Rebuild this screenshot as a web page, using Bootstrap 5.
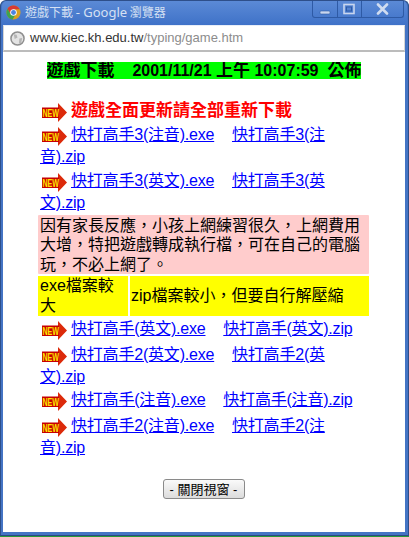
<!DOCTYPE html>
<html lang="zh-Hant">
<head>
<meta charset="utf-8">
<title>遊戲下載</title>
<link href="https://cdn.jsdelivr.net/npm/bootstrap@5.3.0/dist/css/bootstrap.min.css" rel="stylesheet">
<style>
html,body{margin:0;height:537px;overflow:hidden;background:#fff}
.win-frame{height:536px;background:#4474c4;border-radius:6px 6px 0 0;border:1px solid #2e4f8a;border-bottom-color:#2b4a80;padding:0 3px 3px 2px;box-shadow:0 1px 0 #2a9a3a}
.win-title{height:24px;background:linear-gradient(#5b8ad6,#3f72c8);margin:0 -2px 0 -1px;padding:0 0 0 4px;border-radius:5px 5px 0 0;color:#d5e0f3;font:12px/22px "Noto Sans CJK TC","Liberation Sans",sans-serif}
.win-title b{font:13px/22px "Noto Sans","Liberation Sans",sans-serif;color:#d5e0f3}
.win-btns{margin-left:auto;height:17px;border:1px solid #2e5aa5;border-top:0;border-radius:0 0 3px 3px;width:92px;margin-right:3px}
.win-btn{flex:1 1 0;border-right:1px solid #2e5aa5}
.win-btn:last-child{border-right:0;flex:0 0 41px}
.addr-bar{height:27px;background:#fff;border-bottom:2px solid #bcbcbc;border-left:1px solid #d5d5d5;border-right:1px solid #d5d5d5;border-top:1px solid #e8eef8;padding-left:6px;font:13px/24px "Liberation Sans",sans-serif;color:#333}
.addr-text{margin-left:5px}
.addr-text span{color:#8c8c8c}
.page-area{flex:1 1 auto;background:#fff;font:16px/22px "Liberation Sans","Noto Sans CJK TC",sans-serif;color:#000;padding:10px 0 0 35px}
.head-row{text-align:center;width:402px;margin-left:-35px;height:27px;line-height:17px;margin-bottom:11px}
.head-text{display:inline-block;background:#0f0;font-weight:700;font-size:16px;line-height:17px;height:17px;white-space:pre;overflow:hidden}
.head-text span{font-size:17px}
.flow-col{width:331px}
.dl-row{padding:0 2px;margin-bottom:2px}
.dl-row.tight{margin-bottom:1px}
.dl-row.loose{margin-bottom:4px}
.dl-row a{color:#00f;text-decoration:underline;letter-spacing:-.2px}
.new-mark{width:25px;height:19px;vertical-align:-6px;margin:0 4px 0 2px}
.new-label{font:bold 10.5px "Liberation Sans",sans-serif;fill:#ffe600}
.hot-line{color:#f00;font-weight:700;font-size:17px}
.note-box{background:#fcc;padding:1px 2px 0;line-height:19.4px;height:59px;border-radius:1px;margin-bottom:2px}
.yellow-row{gap:2px;height:40px;margin-bottom:2px;line-height:20px}
.yellow-a,.yellow-b{background:#ff0;padding:0 2px}
.yellow-a{width:90px}
.yellow-b{flex:1 1 auto;padding-left:1px}
.close-wrap{margin-top:20px;text-align:center;width:331px;line-height:1}
.close-btn{width:82px;height:20px;padding:0;font:13px/17px "Liberation Sans","Noto Sans CJK TC",sans-serif;color:#000;background:linear-gradient(#fafafa,#dcdcdc);border:1px solid #8a8a8a;border-radius:3px}
.close-btn:hover{background:linear-gradient(#fafafa,#dcdcdc);color:#000;border-color:#8a8a8a}
</style>
</head>
<body>
<div class="win-frame d-flex flex-column">
  <div class="win-title d-flex align-items-start">
    <svg width="15" height="15" viewBox="0 0 16 16" class="me-1 mt-1 flex-shrink-0">
      <circle cx="8" cy="8" r="7.5" fill="#d8a020"/>
      <path d="M8 .5A7.500 7.500 0 0 0 1.600 4L4.800 9.500 8 4.600h6.600A7.500 7.500 0 0 0 8 .5z" fill="#d83a32"/>
      <path d="M1.600 4A7.500 7.500 0 0 0 7 15.400l3.200-5.200L4.800 9.500z" fill="#3fa34d"/>
      <circle cx="8" cy="8" r="3.500" fill="#fff"/><circle cx="8" cy="8" r="2.600" fill="#4a84e0"/>
    </svg>
    <span>遊戲下載 <b class="fw-normal">- Google</b> 瀏覽器</span>
    <div class="win-btns d-flex">
      <div class="win-btn d-flex align-items-center justify-content-center"><svg width="12" height="12" viewBox="0 0 12 12"><rect x="1" y="8" width="10" height="3" rx="1" fill="#c9d6ee" stroke="#2e5aa5" stroke-width=".6"/></svg></div>
      <div class="win-btn d-flex align-items-center justify-content-center"><svg width="12" height="12" viewBox="0 0 12 12"><rect x="1" y="1.500" width="10" height="9" fill="none" stroke="#c9d6ee" stroke-width="1.600"/><rect x="3.500" y="4" width="5" height="4" fill="none" stroke="#2e5aa5"/></svg></div>
      <div class="win-btn d-flex align-items-center justify-content-center"><svg width="13" height="12" viewBox="0 0 13 12"><path d="M2 1.500l9 9M11 1.500l-9 9" stroke="#d0dcf0" stroke-width="2.600" stroke-linecap="round"/></svg></div>
    </div>
  </div>
  <div class="addr-bar d-flex align-items-center">
    <svg width="15" height="15" viewBox="0 0 16 16" class="flex-shrink-0">
      <circle cx="8" cy="8" r="7" fill="#e4e4e4" stroke="#8f8f8f" stroke-width="1.600"/>
      <path d="M4 3.500l3 .5 1 3-3 1.500zM10 8l3-.5-1 5-2.500 1z" fill="#b5b5b5"/>
    </svg>
    <div class="addr-text">www.kiec.kh.edu.tw<span>/typing/game.htm</span></div>
  </div>
  <div class="page-area">
    <div class="head-row"><div class="head-text"><span>遊戲下載</span>    2001/11/21 <span>上午</span> 10:07:59  <span>公佈</span></div></div>
    <div class="flow-col">
      <div class="dl-row hot-line"><svg class="new-mark" viewBox="0 0 25 19"><path d="M0 5h16V0l9 9.500-9 9.500v-5H0z" fill="#dc2a0a"/><rect y="4.500" width="17" height="10.500" fill="#c80000"/><text x=".5" y="13.500" class="new-label" textLength="16.500" lengthAdjust="spacingAndGlyphs">NEW</text></svg>遊戲全面更新請全部重新下載</div>
      <div class="dl-row"><svg class="new-mark" viewBox="0 0 25 19"><path d="M0 5h16V0l9 9.500-9 9.500v-5H0z" fill="#dc2a0a"/><rect y="4.500" width="17" height="10.500" fill="#c80000"/><text x=".5" y="13.500" class="new-label" textLength="16.500" lengthAdjust="spacingAndGlyphs">NEW</text></svg><a href="#">快打高手3(注音).exe</a>&nbsp;&nbsp;&nbsp; <a href="#">快打高手3(注音).zip</a></div>
      <div class="dl-row tight"><svg class="new-mark" viewBox="0 0 25 19"><path d="M0 5h16V0l9 9.500-9 9.500v-5H0z" fill="#dc2a0a"/><rect y="4.500" width="17" height="10.500" fill="#c80000"/><text x=".5" y="13.500" class="new-label" textLength="16.500" lengthAdjust="spacingAndGlyphs">NEW</text></svg><a href="#">快打高手3(英文).exe</a>&nbsp;&nbsp;&nbsp; <a href="#">快打高手3(英文).zip</a></div>
      <div class="note-box">因有家長反應，小孩上網練習很久，上網費用大增，特把遊戲轉成執行檔，可在自己的電腦玩，不必上網了。</div>
      <div class="yellow-row d-flex">
        <div class="yellow-a">exe檔案較大</div>
        <div class="yellow-b d-flex align-items-center">zip檔案較小，但要自行解壓縮</div>
      </div>
      <div class="dl-row loose"><svg class="new-mark" viewBox="0 0 25 19"><path d="M0 5h16V0l9 9.500-9 9.500v-5H0z" fill="#dc2a0a"/><rect y="4.500" width="17" height="10.500" fill="#c80000"/><text x=".5" y="13.500" class="new-label" textLength="16.500" lengthAdjust="spacingAndGlyphs">NEW</text></svg><a href="#">快打高手(英文).exe</a>&nbsp;&nbsp;&nbsp; <a href="#">快打高手(英文).zip</a></div>
      <div class="dl-row tight"><svg class="new-mark" viewBox="0 0 25 19"><path d="M0 5h16V0l9 9.500-9 9.500v-5H0z" fill="#dc2a0a"/><rect y="4.500" width="17" height="10.500" fill="#c80000"/><text x=".5" y="13.500" class="new-label" textLength="16.500" lengthAdjust="spacingAndGlyphs">NEW</text></svg><a href="#">快打高手2(英文).exe</a>&nbsp;&nbsp;&nbsp; <a href="#">快打高手2(英文).zip</a></div>
      <div class="dl-row loose"><svg class="new-mark" viewBox="0 0 25 19"><path d="M0 5h16V0l9 9.500-9 9.500v-5H0z" fill="#dc2a0a"/><rect y="4.500" width="17" height="10.500" fill="#c80000"/><text x=".5" y="13.500" class="new-label" textLength="16.500" lengthAdjust="spacingAndGlyphs">NEW</text></svg><a href="#">快打高手(注音).exe</a>&nbsp;&nbsp;&nbsp; <a href="#">快打高手(注音).zip</a></div>
      <div class="dl-row"><svg class="new-mark" viewBox="0 0 25 19"><path d="M0 5h16V0l9 9.500-9 9.500v-5H0z" fill="#dc2a0a"/><rect y="4.500" width="17" height="10.500" fill="#c80000"/><text x=".5" y="13.500" class="new-label" textLength="16.500" lengthAdjust="spacingAndGlyphs">NEW</text></svg><a href="#">快打高手2(注音).exe</a>&nbsp;&nbsp;&nbsp; <a href="#">快打高手2(注音).zip</a></div>
      <div class="close-wrap"><button type="button" class="btn close-btn">- 關閉視窗 -</button></div>
    </div>
  </div>
</div>
<script src="https://cdn.jsdelivr.net/npm/bootstrap@5.3.0/dist/js/bootstrap.bundle.min.js"></script>
</body>
</html>
